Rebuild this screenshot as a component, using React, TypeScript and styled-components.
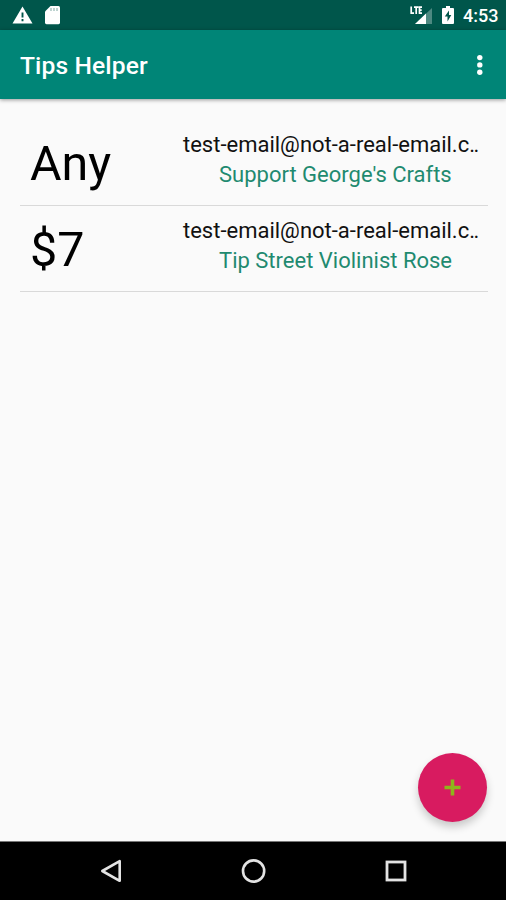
import React from "react";
import styled, { createGlobalStyle } from "styled-components";

const GlobalStyle = createGlobalStyle`
  * { box-sizing: border-box; }
  body { margin: 0; background: #fafafa; font-family: Roboto, sans-serif; }
`;

const Screen = styled.div`
  display: flex;
  flex-direction: column;
  width: 506px;
  height: 900px;
  overflow: hidden;
  background: #fafafa;
  position: relative;
`;

const StatusBar = styled.header`
  display: flex;
  align-items: center;
  height: 30px;
  flex: none;
  padding: 0 9px 0 12px;
  background: #00564b;
  color: #fff;
`;

const StatusIcon = styled.svg<{ $gap: number }>`
  flex: none;
  display: block;
  margin-right: ${(p) => p.$gap}px;
`;

const Spacer = styled.div`
  flex: 1;
`;

const Clock = styled.span`
  font-size: 18px;
  line-height: 30px;
  font-weight: 500;
  padding-top: 2px;
  width: 34px;
  white-space: nowrap;
`;

const Toolbar = styled.div`
  display: flex;
  align-items: center;
  justify-content: space-between;
  height: 68.5px;
  flex: none;
  padding: 2px 22px 0 20px;
  background: #008577;
  box-shadow: 0 1px 4px rgba(0, 0, 0, 0.4);
`;

const Title = styled.h1`
  margin: 0;
  padding-top: 2px;
  font-size: 24.6px;
  letter-spacing: 0.12px;
  line-height: 32px;
  font-weight: 500;
  color: #fff;
`;

const MenuButton = styled.button`
  display: flex;
  padding: 0;
  border: 0;
  background: none;
`;

const TipList = styled.ul`
  flex: 1;
  margin: 0;
  padding: 21px 18px 0 20px;
  list-style: none;
`;

const TipRow = styled.li`
  display: flex;
  height: 86.3px;
  padding: 10px 8px 0 10px;
  border-bottom: 1.5px solid #d9d9d9;
`;

const Amount = styled.div`
  flex: none;
  width: 153px;
  font-size: 48.4px;
  line-height: 58px;
  padding-top: 5px;
  color: #000;
`;

const Details = styled.div`
  flex: none;
  font-size: 22px;
  line-height: 30px;
  white-space: nowrap;
`;

const Email = styled.div`
  color: #111;
`;

const Truncation = styled.span`
  letter-spacing: -1.4px;
`;

const Purpose = styled.div`
  padding-left: 36px;
  color: #1f8a70;
`;

const AddButton = styled.button`
  position: absolute;
  left: 418px;
  top: 753px;
  width: 69px;
  height: 69px;
  display: flex;
  align-items: center;
  justify-content: center;
  padding: 0;
  border: 0;
  border-radius: 50%;
  background: #d81b60;
  box-shadow: 0 5px 9px rgba(0, 0, 0, 0.2);
`;

const NavBar = styled.nav`
  display: flex;
  flex: none;
  align-items: center;
  justify-content: space-between;
  height: 59px;
  padding: 0 98px 0 99px;
  background: #000;
  border-top: 1px solid #777;
`;

const tips = [
  { amount: "Any", email: "test-email@not-a-real-email.c", purpose: "Support George's Crafts" },
  { amount: "$7", email: "test-email@not-a-real-email.c", purpose: "Tip Street Violinist Rose" },
];

export default function App() {
  return (
    <>
      <GlobalStyle />
      <Screen>
        <StatusBar>
          <StatusIcon $gap={12} width="21" height="20" viewBox="0 0 21 20">
            <path d="M10.5 1.5 20.5 18.5H.5Z" fill="#fff" />
            <path d="M10.5 7.5v5M10.5 14v2.2" stroke="#00564b" strokeWidth="1.9" />
          </StatusIcon>
          <StatusIcon $gap={0} width="16" height="20" viewBox="0 0 16 20">
            <path d="M5.5 1H13.5Q15 1 15 2.5V17.5Q15 19.3 13.5 19.3H1.5Q0 19.3 0 17.5V6.5Z" fill="#fff" />
            <path d="M6 3v3M9 3v3M12 3v3" stroke="#00564b" strokeWidth="1" opacity=".5" />
          </StatusIcon>
          <Spacer />
          <StatusIcon $gap={9} width="24" height="20" viewBox="0 0 24 20">
            <path d="M23 3V19H6Z" fill="#fff" opacity=".3" />
            <path d="M17 8.5V19H6Z" fill="#fff" />
            <path
              d="M2.2 1.5V8.2H5M5 2.2H9.5M7.2 2.2V9M13 2.2H10.5V8.2H13M10.5 5.2H12.7"
              fill="none"
              stroke="#fff"
              strokeWidth="1.7"
            />
          </StatusIcon>
          <StatusIcon $gap={9} width="12" height="20" viewBox="0 0 12 20">
            <path d="M4 1H8V3H11Q12 3 12 4V18Q12 19 11 19H1Q0 19 0 18V4Q0 3 1 3H4Z" fill="#fff" />
            <path d="M7 5.5 2.8 11.5H5.5V16.5L9.3 10H7Z" fill="#00564b" />
          </StatusIcon>
          <Clock>4:53</Clock>
        </StatusBar>
        <Toolbar>
          <Title>Tips Helper</Title>
          <MenuButton aria-label="More options">
            <svg width="8" height="22" viewBox="0 0 8 22" fill="#fff">
              <circle cx="3.8" cy="3.6" r="2.7" />
              <circle cx="3.8" cy="10.9" r="2.7" />
              <circle cx="3.8" cy="18.2" r="2.7" />
            </svg>
          </MenuButton>
        </Toolbar>
        <TipList>
          {tips.map((tip) => (
            <TipRow key={tip.amount}>
              <Amount>{tip.amount}</Amount>
              <Details>
                <Email>
                  {tip.email}
                  <Truncation>..</Truncation>
                </Email>
                <Purpose>{tip.purpose}</Purpose>
              </Details>
            </TipRow>
          ))}
        </TipList>
        <AddButton aria-label="Add tip">
          <svg width="17" height="17" viewBox="0 0 17 17">
            <path d="M8.5 .5V16.5M.5 8.5H16.5" stroke="#8eb51b" strokeWidth="3.6" />
          </svg>
        </AddButton>
        <NavBar>
          <svg width="24" height="28" viewBox="0 0 24 28">
            <path d="M3.3 14 20.7 4.2V23.8Z" fill="none" stroke="#e3e3e3" strokeWidth="2.6" strokeLinejoin="round" />
          </svg>
          <svg width="26" height="28" viewBox="0 0 26 28">
            <circle cx="12.6" cy="14" r="10.6" fill="none" stroke="#e3e3e3" strokeWidth="2.6" />
          </svg>
          <svg width="24" height="28" viewBox="0 0 24 28">
            <rect x="3" y="5" width="18" height="18" fill="none" stroke="#e3e3e3" strokeWidth="2.8" />
          </svg>
        </NavBar>
      </Screen>
    </>
  );
}
